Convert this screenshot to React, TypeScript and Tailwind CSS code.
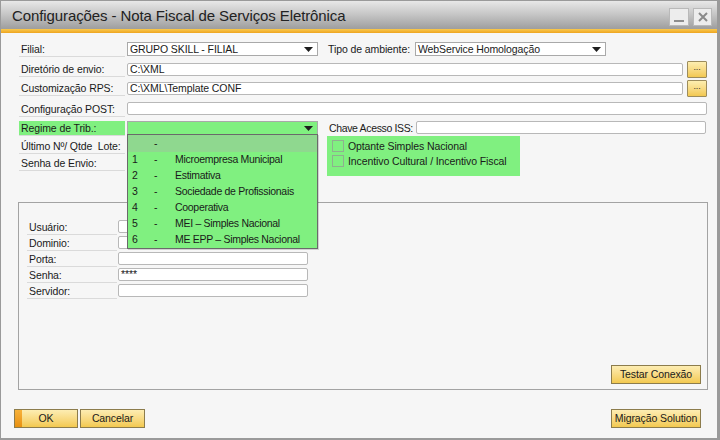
import React from "react";

function Arrow() {
  return (
    <svg width="9" height="5" viewBox="0 0 9 5" className="shrink-0">
      <path d="M0 0h9L4.5 5z" fill="#1e1e1e" />
    </svg>
  );
}

function Label({ children, green = false, w = "w-[106px]" }: { children?: React.ReactNode; green?: boolean; w?: string }) {
  return (
    <div
      className={`${w} h-[15px] shrink-0 border-b border-[#dadada] pl-[2px] text-[10.5px] leading-[14px] text-[#1a1a1a] whitespace-nowrap ${
        green ? "bg-[#80f080]" : ""
      }`}
    >
      {children}
    </div>
  );
}

function Combo({ text, w, green = false }: { text?: string; w: string; green?: boolean }) {
  return (
    <div
      className={`${w} h-[14px] shrink-0 flex items-center justify-between border border-[#a9a9a9] pl-[2px] pr-[4px] text-[10.5px] leading-[12px] ${
        green ? "bg-[#80f080]" : "bg-white"
      }`}
    >
      <span className="whitespace-nowrap">{text}</span>
      <Arrow />
    </div>
  );
}

function Input({ text, w }: { text?: string; w: string }) {
  return (
    <div className={`${w} h-[13px] shrink-0 rounded-[2px] border border-[#b8b8b8] bg-white pl-[2px] text-[10.5px] leading-[11px] whitespace-nowrap`}>
      {text}
    </div>
  );
}

function Dots() {
  return (
    <div className="ml-[4px] flex h-[17px] w-[20px] shrink-0 items-start justify-center rounded-[1px] border border-[#9c8c5c] bg-gradient-to-b from-[#fdeeb0] to-[#f2c850] text-[9px] leading-[10px] text-[#333]">
      ...
    </div>
  );
}

function YButton({ children, w }: { children: React.ReactNode; w: string }) {
  return (
    <div
      className={`${w} flex h-[19px] items-center justify-center border border-[#8c7c4c] bg-gradient-to-b from-[#fdedb2] to-[#f3c94e] text-[10.5px] text-[#1a1a1a]`}
    >
      {children}
    </div>
  );
}

const items = [
  ["1", "Microempresa Municipal"],
  ["2", "Estimativa"],
  ["3", "Sociedade de Profissionais"],
  ["4", "Cooperativa"],
  ["5", "MEI \u2013 Simples Nacional"],
  ["6", "ME EPP \u2013 Simples Nacional"],
];

export default function App() {
  return (
    <div className="relative flex h-[440px] w-[720px] flex-col overflow-hidden border border-r-[3px] border-b-[2px] border-[#9a9a9a] bg-[#f6f6f6] font-['Liberation_Sans',Arial,sans-serif] tracking-[-0.1px] text-[#1a1a1a]">
      {/* Title bar */}
      <div className="flex h-[28px] shrink-0 items-center justify-between bg-gradient-to-b from-[#e8e8e8] via-[#c4c4c4] to-[#9e9e9e] pl-[11px] pr-[5px]">
        <div className="text-[15px] leading-[18px] text-[#222] tracking-[-0.1px] pt-[2px]">Configurações - Nota Fiscal de Serviços Eletrônica</div>
        <div className="flex gap-[4px] pt-[4px]">
          <div className="flex h-[18px] w-[20px] items-end justify-center border border-[#b9b9b9] bg-[#ededed] pb-[3px]">
            <div className="h-[2px] w-[10px] bg-[#8e8e8e]" />
          </div>
          <div className="flex h-[18px] w-[19px] items-center justify-center border border-[#b9b9b9] bg-[#ededed]">
            <svg width="10" height="10" viewBox="0 0 10 10">
              <path d="M1 1L9 9M9 1L1 9" stroke="#8a8a8a" strokeWidth="2" />
            </svg>
          </div>
        </div>
      </div>
      <div className="h-[4px] shrink-0 bg-gradient-to-b from-[#f9c94c] to-[#eea51d]" />

      {/* Content */}
      <div className="flex flex-1 flex-col pl-[18px]">
        {/* Row 1 */}
        <div className="mt-[9px] flex items-start">
          <Label>Filial:</Label>
          <div className="ml-[2px]">
            <Combo w="w-[191px]" text="GRUPO SKILL - FILIAL" />
          </div>
          <div className="ml-[10px] w-[87px] pt-[1px] text-[10.5px] leading-[12px] whitespace-nowrap">Tipo de ambiente:</div>
          <Combo w="w-[191px]" text="WebService Homologação" />
        </div>
        {/* Row 2 */}
        <div className="mt-[4px] flex items-center">
          <Label>Diretório de envio:</Label>
          <div className="ml-[2px]">
            <Input w="w-[556px]" text="C:\XML" />
          </div>
          <Dots />
        </div>
        {/* Row 3 */}
        <div className="mt-[2px] flex items-center">
          <Label>Customização RPS:</Label>
          <div className="ml-[2px]">
            <Input w="w-[556px]" text="C:\XML\Template CONF" />
          </div>
          <Dots />
        </div>
        {/* Row 4 */}
        <div className="mt-[5px] flex items-start">
          <Label>Configuração POST:</Label>
          <div className="ml-[2px]">
            <Input w="w-[580px]" />
          </div>
        </div>
        {/* Row 5 */}
        <div className="mt-[4px] flex items-start">
          <Label green>Regime de Trib.:</Label>
          <div className="ml-[2px]">
            <Combo w="w-[191px]" green />
          </div>
          <div className="ml-[11px] w-[87px] pt-[1px] text-[10.5px] leading-[12px] tracking-[-0.35px] whitespace-nowrap">Chave Acesso ISS:</div>
          <Input w="w-[290px]" />
        </div>
        {/* Rows 6-7 */}
        <div className="flex items-start">
          <div className="mt-[3px] flex w-[299px] flex-col gap-[2px]">
            <div className="flex">
              <Label>Último Nº/ Qtde&nbsp; Lote:</Label>
              <div className="ml-[2px]">
                <Input w="w-[191px]" />
              </div>
            </div>
            <div className="flex">
              <Label>Senha de Envio:</Label>
            </div>
          </div>
          <div className="ml-[9px] flex h-[40px] w-[193px] flex-col gap-[3px] bg-[#80f080] pl-[5px] pt-[4px]">
            <div className="flex items-center">
              <div className="h-[12px] w-[12px] border border-[#8fb08f] bg-[#80f080]" />
              <span className="ml-[4px] text-[10.5px] leading-[12px]">Optante Simples Nacional</span>
            </div>
            <div className="flex items-center">
              <div className="h-[12px] w-[12px] border border-[#8fb08f] bg-[#80f080]" />
              <span className="ml-[4px] text-[10.5px] leading-[12px]">Incentivo Cultural / Incentivo Fiscal</span>
            </div>
          </div>
        </div>

        {/* Group panel */}
        <div className="-ml-[1px] mt-[26px] flex h-[188px] w-[690px] flex-col border border-[#a3a3a3] pl-[8px] pr-[6px] pb-[5px] pt-[17px]">
          {[
            ["Usuário:", ""],
            ["Dominio:", ""],
            ["Porta:", ""],
            ["Senha:", "****"],
            ["Servidor:", ""],
          ].map(([l, v]) => (
            <div key={l} className="flex h-[16px] items-start">
              <Label w="w-[90px]">{l}</Label>
              <div className="ml-[1px]">
                <Input w="w-[190px]" text={v} />
              </div>
            </div>
          ))}
          <div className="mt-auto self-end">
            <YButton w="w-[90px]">Testar Conexão</YButton>
          </div>
        </div>

        {/* Bottom buttons */}
        <div className="mt-[19px] -ml-[5px] flex w-[700px] items-start">
          <div className="flex h-[19px] w-[64px] border border-[#8c7c4c] bg-gradient-to-b from-[#fdedb2] to-[#f3c94e] text-[10.5px]">
            <div className="h-full w-[7px] bg-gradient-to-b from-[#f7b23a] to-[#e8900c]" />
            <div className="flex flex-1 items-center justify-center pr-[7px]">OK</div>
          </div>
          <div className="ml-[2px]">
            <YButton w="w-[65px]">Cancelar</YButton>
          </div>
          <div className="ml-auto mr-[13px]">
            <YButton w="w-[90px]">Migração Solution</YButton>
          </div>
        </div>
      </div>

      {/* Dropdown list overlay */}
      <div className="absolute left-[126px] top-[133px] w-[191px] border border-[#6a6a6a] bg-[#80f080] text-[10.5px] tracking-[-0.3px] shadow-[1px_1px_0_rgba(0,0,0,0.15)]">
        <div className="flex h-[17px] items-center bg-[#8fd88f]">
          <span className="w-[26px] pl-[4px]"></span>
          <span className="w-[21px]">-</span>
        </div>
        {items.map(([n, t]) => (
          <div key={n} className="flex h-[16px] items-center whitespace-nowrap">
            <span className="w-[26px] pl-[4px]">{n}</span>
            <span className="w-[21px]">-</span>
            <span>{t}</span>
          </div>
        ))}
      </div>
    </div>
  );
}
